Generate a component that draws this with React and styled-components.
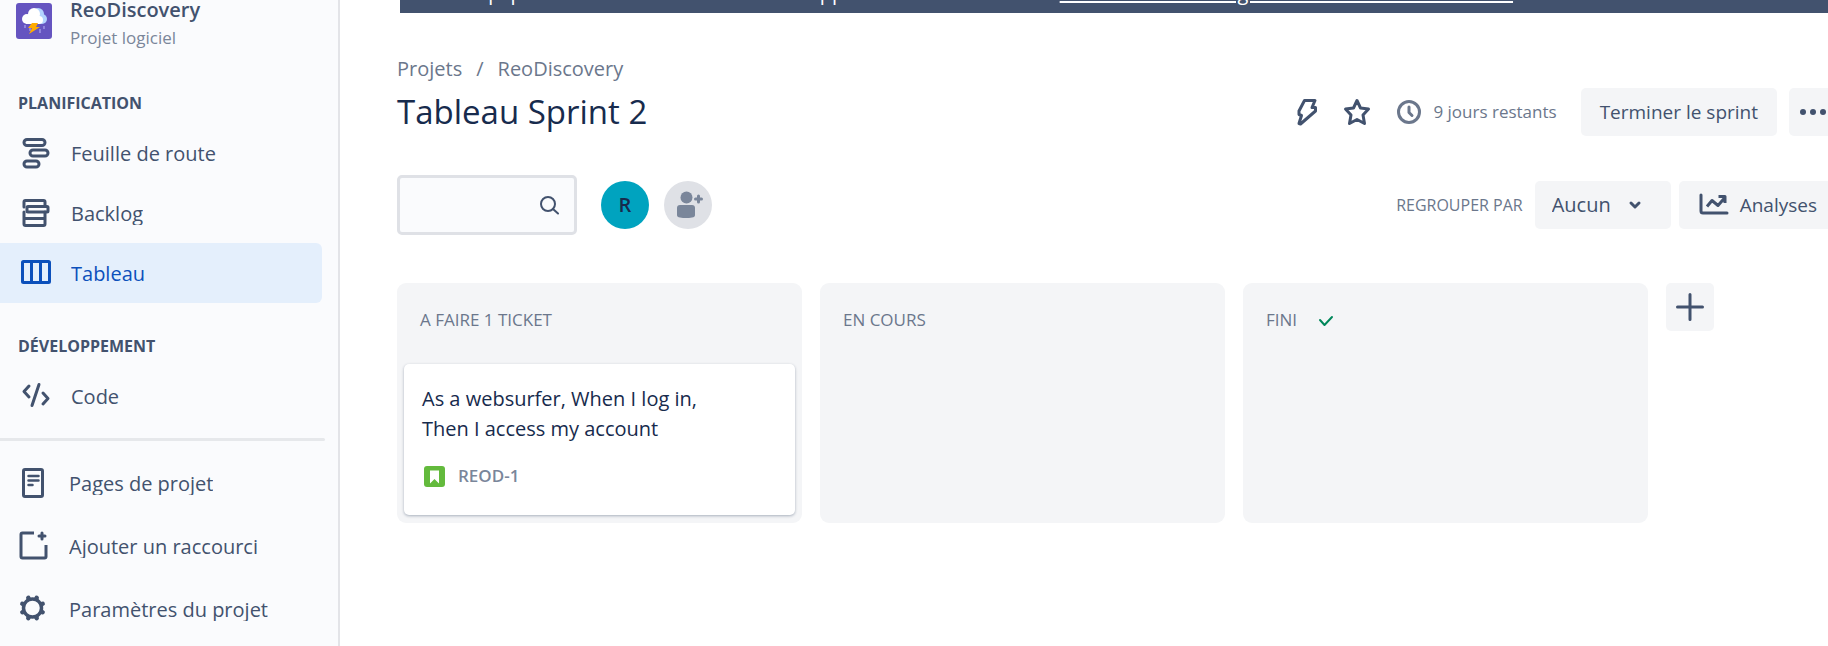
import React from "react";
import styled, { createGlobalStyle, css } from "styled-components";

const Global = createGlobalStyle`
  *, *::before, *::after { box-sizing: border-box; }
  html { height: 100%; }
  body { margin: 0; height: 100%; overflow: hidden; background: #fff; color: #42526e; font: 20px/30px "Open Sans", "Noto Sans", sans-serif; }
  #root { height: 100%; }
  button, select, input { font: inherit; color: inherit; margin: 0; border: 0; }
  h1, h2, p, ul { margin: 0; padding: 0; font-weight: 400; }
  a { color: inherit; text-decoration: none; }
  svg { display: block; flex: none; }
`;

const Layout = styled.div`
  display: flex;
  min-height: 100%;
`;

const Sidebar = styled.nav`
  flex: 0 0 340px;
  background: #fafbfd;
  border-right: 2px solid #e3e4e8;
`;

const ProjectHeader = styled.header`
  display: flex;
  gap: 18px;
  padding: 3px 0 0 16px;
`;

const ProjectText = styled.div`
  margin-top: -7px;
`;

const ProjectName = styled.div`
  font-size: 20px;
  line-height: 28px;
  font-weight: 600;
`;

const ProjectKind = styled.div`
  font-size: 17px;
  line-height: 28px;
  color: #7a869a;
`;

const GroupTitle = styled.h2`
  padding: ${(p) => (p.$first ? "36px" : "28px")} 0 0 18px;
  font-size: 16px;
  line-height: 30px;
  font-weight: 700;
`;

const NavList = styled.ul`
  list-style: none;
  padding-top: ${(p) => p.$top}px;
`;

const NavLink = styled.a`
  display: flex;
  align-items: center;
  height: ${(p) => (p.$tall ? 63 : 60)}px;
  padding-left: ${(p) => (p.$tall ? 16 : 19)}px;
  gap: ${(p) => (p.$tall ? 19 : 18)}px;
  margin-right: 16px;
  border-radius: 0 6px 6px 0;
  ${(p) =>
    p.$active &&
    css`
      background: #e4effc;
      color: #0c50bb;
    `}
`;

const NavLabel = styled.span`
  padding-top: 2px;
  line-height: 22px;
  overflow: hidden;
  white-space: nowrap;
`;

const Rule = styled.hr`
  margin: 12px 13px 10px 0;
  border: 0;
  height: 3px;
  border-radius: 0 2px 2px 0;
  background: #e6e8eb;
`;

const Main = styled.main`
  flex: 1;
  min-width: 0;
  overflow: hidden;
  padding-left: 57px;
`;

const Banner = styled.div`
  display: flex;
  align-items: flex-end;
  height: 13px;
  margin-left: 3px;
  padding: 0 0 5px 14px;
  overflow: hidden;
  background: #42526e;
  color: #fff;
  line-height: 30px;
  white-space: nowrap;
  a { text-decoration: underline; }
`;

const Crumbs = styled.nav`
  display: flex;
  gap: 14px;
  padding-top: 41px;
  line-height: 30px;
  color: #6b778c;
`;

const TitleRow = styled.div`
  display: flex;
  align-items: center;
  justify-content: space-between;
  height: 56px;
`;

const Title = styled.h1`
  font-size: 33px;
  line-height: 48px;
  color: #172b4d;
  white-space: nowrap;
`;

const Actions = styled.div`
  display: flex;
  align-items: center;
  gap: 2px;
  flex: none;
  margin-right: -9px;
`;

const IconButton = styled.button`
  display: grid;
  place-items: center;
  width: 48px;
  height: 48px;
  padding: 0;
  border-radius: 5px;
  background: ${(p) => (p.$filled ? "#f4f5f7" : "transparent")};
`;

const TimeLeft = styled.div`
  display: flex;
  align-items: center;
  gap: 12px;
  margin: 0 22px 0 14px;
  font-size: 17px;
  color: #6b778c;
`;

const Button = styled.button`
  display: flex;
  align-items: center;
  gap: 10px;
  height: 48px;
  padding: 0 19px;
  border-radius: 5px;
  background: #f4f5f7;
  font-size: 19px;
  white-space: nowrap;
`;

const Spaced = styled.div`
  display: flex;
  gap: 12px;
`;

const Toolbar = styled.div`
  display: flex;
  align-items: center;
  justify-content: space-between;
  margin-top: 35px;
  height: 60px;
`;

const People = styled.div`
  display: flex;
  align-items: center;
  gap: 15px;
`;

const Search = styled.label`
  display: flex;
  align-items: center;
  width: 180px;
  height: 60px;
  margin-right: 9px;
  padding: 0 15px 0 8px;
  border: 3px solid #dfe1e6;
  border-radius: 5px;
  background: #fafbfd;
  input { flex: 1; min-width: 0; background: transparent; outline: 0; }
`;

const Avatar = styled.button`
  display: grid;
  place-items: center;
  width: 48px;
  height: 48px;
  padding: 0;
  border-radius: 50%;
  background: ${(p) => p.$bg};
  color: #172b4d;
  font-weight: 600;
`;

const GroupBy = styled.div`
  display: flex;
  align-items: center;
  flex: none;
  margin-right: -8px;
  label { font-size: 16px; color: #6b778c; margin-right: 12px; }
`;

const SelectBox = styled.div`
  display: grid;
  align-items: center;
  margin-right: 8px;
  border-radius: 5px;
  background: #f4f5f7;
  > * { grid-area: 1 / 1; }
  svg { justify-self: end; margin-right: 29px; pointer-events: none; }
`;

const Select = styled.select`
  appearance: none;
  width: 136px;
  height: 48px;
  padding: 0 50px 0 17px;
  background: transparent;
`;

const Board = styled.div`
  display: flex;
  align-items: flex-start;
  gap: 18px;
  margin: 48px 114px 0 0;
`;

const Column = styled.section`
  flex: 1;
  min-width: 0;
  min-height: 240px;
  padding: 0 7px;
  border-radius: 9px;
  background: #f4f5f7;
`;

const ColumnTitle = styled.h2`
  display: flex;
  align-items: center;
  gap: 20px;
  height: 81px;
  padding: 0 16px 8px;
  font-size: 17px;
  color: #6b778c;
`;

const Card = styled.article`
  min-height: 151px;
  padding: 20px 18px;
  border-radius: 5px;
  background: #fff;
  box-shadow: 0 1px 3px rgba(9, 30, 66, 0.32);
  color: #172b4d;
  p { max-width: 300px; }
`;

const Issue = styled.a`
  display: flex;
  align-items: center;
  gap: 13px;
  margin-top: 20px;
  padding-left: 2px;
  font-size: 17px;
  line-height: 24px;
  font-weight: 600;
  color: #7a869a;
`;

const Icon = ({ size = 34, w = 3, children }) => (
  <svg width={size} height={size} viewBox={`0 0 ${size} ${size}`} fill="none" stroke="currentColor" strokeWidth={w} strokeLinecap="round" strokeLinejoin="round" aria-hidden="true">
    {children}
  </svg>
);

const Storm = () => (
  <svg width="36" height="36" viewBox="0 0 36 36" aria-hidden="true">
    <rect width="36" height="36" rx="3" fill="#6554c0" />
    <path d="M9 22v3M14 25v3M24 26v4M28 23v3" stroke="#8f83dc" strokeWidth="2" />
    <circle cx="26" cy="16" r="5" fill="#b3d4ff" />
    <circle cx="22" cy="11" r="6" fill="#b3d4ff" />
    <circle cx="18" cy="11" r="6" fill="#fff" />
    <circle cx="11" cy="16" r="5" fill="#fff" />
    <circle cx="23" cy="17" r="4" fill="#fff" />
    <path d="M10 13h14v8H10z" fill="#fff" />
    <path d="M16 20h6l-2 4h4l-11 7 3-6h-4z" fill="#ffab00" />
  </svg>
);

const Roadmap = () => (
  <Icon>
    <rect x="5" y="3.500" width="21" height="6" rx="3" />
    <rect x="11" y="14" width="18" height="6" rx="3" />
    <rect x="5" y="25" width="15" height="6" rx="3" />
  </Icon>
);
const Backlog = () => (
  <Icon>
    <path d="M5 11V6q0-1.500 1.500-1.500h18q1.500 0 1.500 1.500V10" />
    <rect x="8" y="10.500" width="21" height="5.500" rx="1" />
    <path d="M5 16v12q0 1.500 1.500 1.500h18q1.500 0 1.500-1.500V16M5 22.500h21" />
  </Icon>
);
const BoardIcon = () => (
  <Icon>
    <rect x="3.500" y="5.500" width="27" height="21" rx="1" />
    <path d="M12.500 6v20M21.500 6v20" />
  </Icon>
);
const Code = () => (
  <Icon>
    <path d="M10 7l-5 5.500 5 5.500M20 5.500l-7 21M24 14l5 5.500-5 5.500" />
  </Icon>
);
const Page = () => (
  <Icon>
    <rect x="7.500" y="3.500" width="19" height="27" rx="1.500" />
    <path d="M12.500 10h10M12.500 14.500h10M12.500 19h4" strokeWidth="2.500" />
  </Icon>
);
const Shortcut = () => (
  <Icon>
    <path d="M18 4H6.500Q5 4 5 5.500v22Q5 29 6.500 29h22q1.500 0 1.500-1.500V16" strokeLinecap="butt" />
    <path d="M26 4v6M23 7h6" />
  </Icon>
);
const Gear = () => (
  <Icon>
    <circle cx="16.500" cy="16" r="9" strokeWidth="3.500" />
    {[22.5, 67.5, 112.5, 157.5, 202.5, 247.5, 292.5, 337.5].map((a) => (
      <path key={a} d="M16.500 6V5" strokeWidth="4.500" transform={`rotate(${a} 16.500 16)`} />
    ))}
  </Icon>
);

const planning = [
  ["Feuille de route", Roadmap],
  ["Backlog", Backlog],
  ["Tableau", BoardIcon],
];
const project = [
  ["Pages de projet", Page],
  ["Ajouter un raccourci", Shortcut],
  ["Paramètres du projet", Gear],
];

const Items = ({ items, top, tall, active }) => (
  <NavList $top={top}>
    {items.map(([label, Glyph]) => (
      <li key={label}>
        <NavLink href="#" $tall={tall} $active={label === active}>
          <Glyph />
          <NavLabel>{label}</NavLabel>
        </NavLink>
      </li>
    ))}
  </NavList>
);

export default function App() {
  return (
    <>
      <Global />
      <Layout>
        <Sidebar aria-label="Projet">
          <ProjectHeader>
            <Storm />
            <ProjectText>
              <ProjectName>ReoDiscovery</ProjectName>
              <ProjectKind>Projet logiciel</ProjectKind>
            </ProjectText>
          </ProjectHeader>
          <GroupTitle $first>PLANIFICATION</GroupTitle>
          <Items items={planning} top={5} active="Tableau" />
          <GroupTitle>DÉVELOPPEMENT</GroupTitle>
          <Items items={[["Code", Code]]} top={5} />
          <Rule />
          <Items items={project} top={0} tall />
        </Sidebar>
        <Main>
          <Banner>
            <span>
              Votre équipe aurait besoin de mieux développer et de lier ses idées ?{" "}
              <a href="#">Découvrez aussi le guide de la collaboration utile</a>
            </span>
          </Banner>
          <Crumbs aria-label="Fil d'Ariane">
            <a href="#">Projets</a>
            <span>/</span>
            <a href="#">ReoDiscovery</a>
          </Crumbs>
          <TitleRow>
            <Title>Tableau Sprint 2</Title>
            <Actions>
              <IconButton aria-label="Automatisation">
                <Icon>
                  <path d="M14.500 5.500h10.500l-3 7h3.500v3.500L10.500 29l-1.500-.500 2.500-8-2.500-1v-3.500z" />
                </Icon>
              </IconButton>
              <IconButton aria-label="Favori">
                <Icon>
                  <path d="M17 5.500l3.500 7.500 8 1-5.500 6 1.500 8.500L17 24.500l-7.500 4L11 20l-5.500-6 8-1z" />
                </Icon>
              </IconButton>
              <TimeLeft>
                <Icon size={24}>
                  <circle cx="12" cy="12" r="10.500" />
                  <path d="M12 7v5.500l3 3" />
                </Icon>
                9 jours restants
              </TimeLeft>
              <Spaced>
                <Button>Terminer le sprint</Button>
                <IconButton $filled aria-label="Plus d'actions">
                  <Icon size={28}>
                    <g fill="currentColor" stroke="none">
                      <circle cx="4" cy="14" r="3" />
                      <circle cx="14" cy="14" r="3" />
                      <circle cx="24" cy="14" r="3" />
                    </g>
                  </Icon>
                </IconButton>
              </Spaced>
            </Actions>
          </TitleRow>
          <Toolbar>
            <People>
              <Search>
                <input type="search" aria-label="Rechercher sur le tableau" />
                <Icon size={20} w={2}>
                  <circle cx="9" cy="9" r="7" />
                  <path d="M14 14l5 4.500" />
                </Icon>
              </Search>
              <Avatar $bg="#00a3bf">R</Avatar>
              <Avatar $bg="#dfe1e6" aria-label="Ajouter des personnes">
                <svg width="32" height="28" viewBox="-4 0 32 28" fill="#7a869a" aria-hidden="true">
                  <circle cx="10.500" cy="6.500" r="6" />
                  <path d="M1 17q0-3 3-3h12q3 0 3 3v7q0 2-3 2.500-6 1-12 0-3-.500-3-2.500z" />
                  <path d="M22.500 5v6M19.500 8h6" stroke="#7a869a" strokeWidth="3" strokeLinecap="round" />
                </svg>
              </Avatar>
            </People>
            <GroupBy>
              <label htmlFor="group">REGROUPER PAR</label>
              <SelectBox>
                <Select id="group">
                  <option>Aucun</option>
                </Select>
                <Icon size={14}>
                  <path d="M3 5l4 4 4-4" />
                </Icon>
              </SelectBox>
              <Button>
                <Icon size={32}>
                  <path d="M3 6v16q0 2 2 2h24" />
                  <path d="M9 17.500l5-6 6 5 7-8M20.500 7.500h6.500V14" strokeLinecap="butt" />
                </Icon>
                Analyses
              </Button>
            </GroupBy>
          </Toolbar>
          <Board>
            <Column>
              <ColumnTitle>A FAIRE 1 TICKET</ColumnTitle>
              <Card>
                <p>As a websurfer, When I log in, Then I access my account</p>
                <Issue href="#">
                  <svg width="21" height="21" viewBox="0 0 21 21" aria-hidden="true">
                    <rect width="21" height="21" rx="3" fill="#63ba3c" />
                    <path d="M6 4.500h9v13L10.500 13 6 17.500z" fill="#fff" />
                  </svg>
                  REOD-1
                </Issue>
              </Card>
            </Column>
            <Column>
              <ColumnTitle>EN COURS</ColumnTitle>
            </Column>
            <Column>
              <ColumnTitle>
                FINI
                <Icon size={18} w={2}>
                  <path d="M3 9l4.500 5L15 6" stroke="#00875a" />
                </Icon>
              </ColumnTitle>
            </Column>
            <IconButton $filled aria-label="Créer une colonne">
              <Icon size={28}>
                <path d="M14 1.500v25M1.500 14h25" />
              </Icon>
            </IconButton>
          </Board>
        </Main>
      </Layout>
    </>
  );
}
